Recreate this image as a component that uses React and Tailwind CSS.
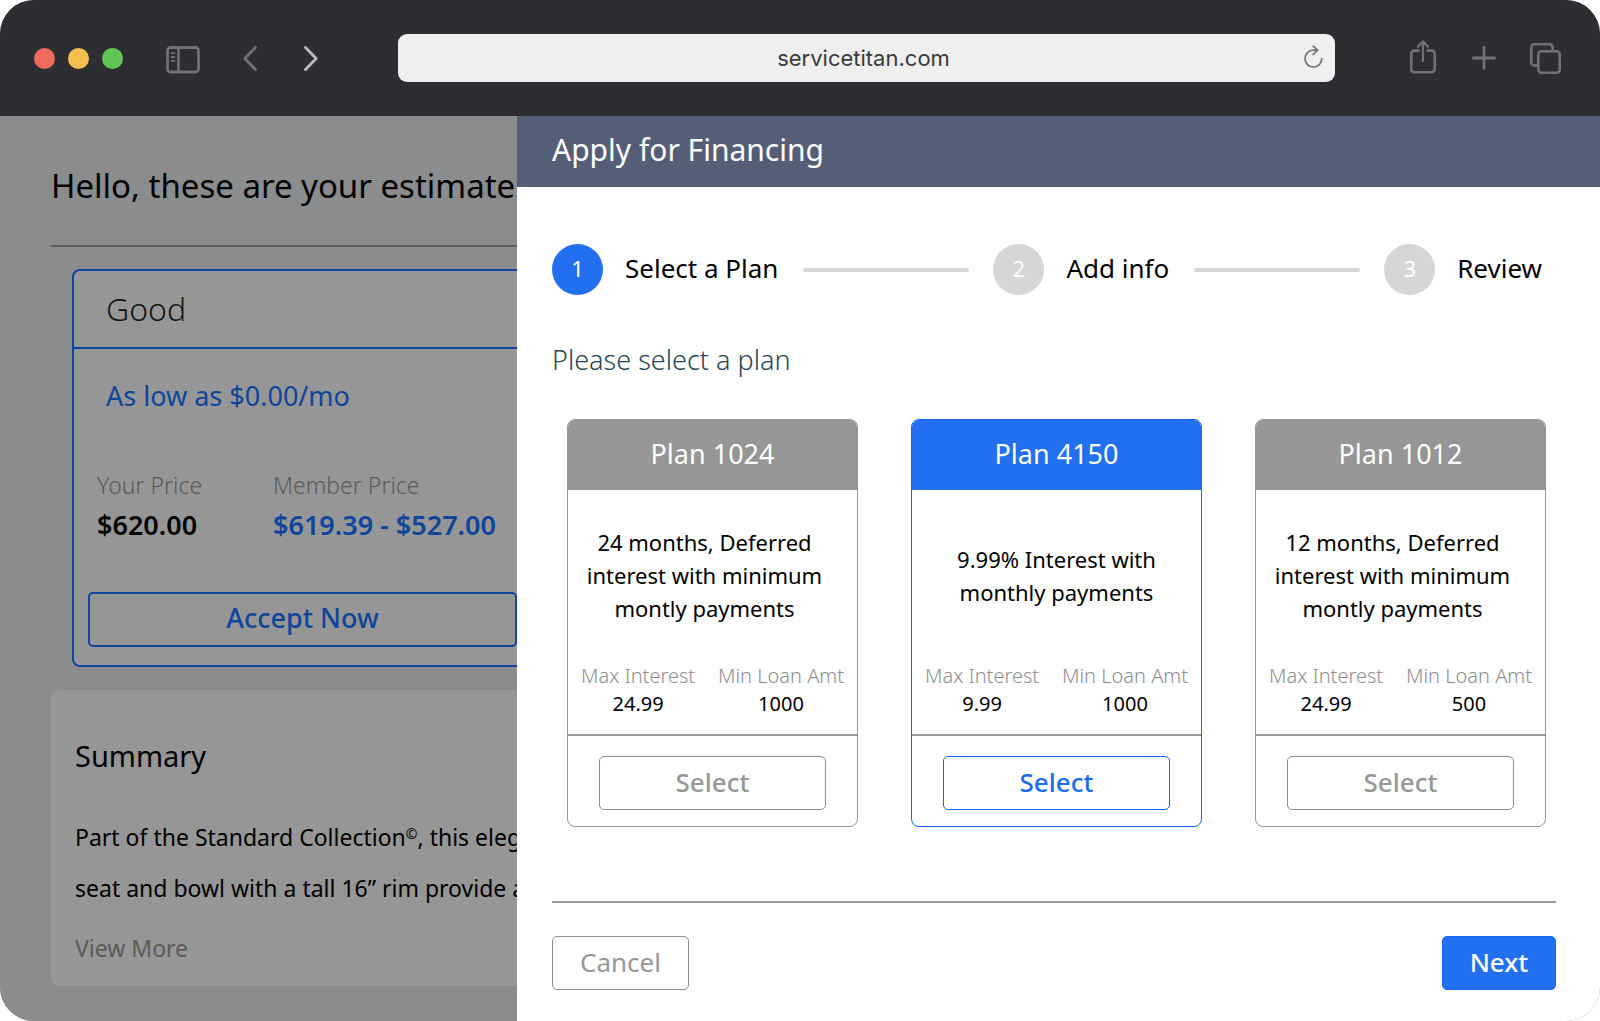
import { useState } from "react";

const plans = [
  { id: "1024", lines: "24 months, Deferred interest with minimum montly payments", maxInterest: "24.99", minLoan: "1000", long: true },
  { id: "4150", lines: "9.99% Interest with monthly payments", maxInterest: "9.99", minLoan: "1000", long: false },
  { id: "1012", lines: "12 months, Deferred interest with minimum montly payments", maxInterest: "24.99", minLoan: "500", long: true },
];

const steps = ["Select a Plan", "Add info", "Review"];

const BrowserBar = () => {
  return (
    <header className="flex h-[116px] items-center bg-[#2d2e32] pl-[34px] pr-[39px] text-[#717173]">
      <div className="flex gap-[13px]">
        <span className="size-[21px] rounded-full bg-[#ed6a5f]" />
        <span className="size-[21px] rounded-full bg-[#f5bf4f]" />
        <span className="size-[21px] rounded-full bg-[#61c555]" />
      </div>

      <button type="button" aria-label="Toggle sidebar" className="ml-[43px] pt-[3px]">
        <svg width="34" height="28" viewBox="0 0 34 28" fill="none" stroke="currentColor" strokeLinecap="round">
          <rect x="1.5" y="1.5" width="31" height="24.5" rx="3" strokeWidth="2.8" />
          <path d="M12.5 2v24" strokeWidth="2.6" />
          <path d="M5.5 7.2h3M5.5 11h3M5.5 14.8h3" strokeWidth="1.8" />
        </svg>
      </button>
      <button type="button" aria-label="Back" className="ml-[43px]">
        <svg width="14" height="26" viewBox="0 0 14 26" fill="none" stroke="currentColor" strokeWidth="2.8" strokeLinecap="round" strokeLinejoin="round">
          <path d="M12.5 2.5 1.8 13.5 12.5 24.5" />
        </svg>
      </button>
      <button type="button" aria-label="Forward" className="ml-[47px] text-[#bcbcbe]">
        <svg width="14" height="26" viewBox="0 0 14 26" fill="none" stroke="currentColor" strokeWidth="2.8" strokeLinecap="round" strokeLinejoin="round">
          <path d="M1.5 2.5 12.2 13.5 1.5 24.5" />
        </svg>
      </button>

      <div className="ml-[80px] flex h-12 flex-1 items-center rounded-[9px] bg-[#efefef] pl-[25px] pr-3">
        <input
          type="text"
          aria-label="Address"
          defaultValue="servicetitan.com"
          className="min-w-0 flex-1 bg-transparent text-center font-[Inter,sans-serif] text-[22px] text-[#3b3b3b] outline-none"
        />
        <button type="button" aria-label="Reload" className="pb-0.5">
          <svg width="19" height="24" viewBox="0 0 19 24" fill="none" stroke="currentColor" strokeWidth="1.7" strokeLinecap="round" strokeLinejoin="round">
            <path d="M17.8 13.6A8.4 8.4 0 1 1 9.4 5.2h4.2" />
            <path d="M9.2 1.2l4.4 4-4.4 4.2" />
          </svg>
        </button>
      </div>

      <button type="button" aria-label="Share" className="ml-[75px] pb-0.5">
        <svg width="26" height="34" viewBox="0 0 26 34" fill="none" stroke="currentColor" strokeWidth="2.6" strokeLinecap="round" strokeLinejoin="round">
          <path d="M8.5 10.6H4.3a3 3 0 0 0-3 3v15.6a3 3 0 0 0 3 3h17.4a3 3 0 0 0 3-3V13.6a3 3 0 0 0-3-3h-4.2" />
          <path d="M13 21V2M8 6.6 13 1.6l5 5" strokeWidth="2.2" />
        </svg>
      </button>
      <button type="button" aria-label="New tab" className="ml-9">
        <svg width="24" height="24" viewBox="0 0 24 24" fill="none" stroke="currentColor" strokeWidth="2.8" strokeLinecap="round">
          <path d="M12 1.4v21.2M1.4 12h21.2" />
        </svg>
      </button>
      <button type="button" aria-label="Show tabs" className="ml-[34px]">
        <svg width="31" height="31" viewBox="0 0 31 31" fill="none" stroke="currentColor" strokeWidth="2.6" strokeLinejoin="round">
          <rect x="8.3" y="8.3" width="21.4" height="21.4" rx="3.2" />
          <path d="M8.3 22.6H4.5a3.2 3.2 0 0 1-3.2-3.2V4.5a3.2 3.2 0 0 1 3.2-3.2h14.9a3.2 3.2 0 0 1 3.2 3.2v3.8" />
        </svg>
      </button>
    </header>
  );
};

// Dimmed page behind the financing drawer
const EstimatePage = () => {
  return (
    <main className="w-[517px] shrink-0 overflow-hidden whitespace-nowrap bg-[#8b8c8e] pb-[34px] pl-[51px] pt-[50px] text-black">
      <h1 className="text-[33px] leading-10">Hello, these are your estimate</h1>
      <hr className="mt-[39px] border-t-2 border-[#5f5f60]" />

      <section className="ml-[21px] mt-[22px] w-[600px] rounded-lg border-2 border-[#0f459b] bg-[#969696]">
        <h2 className="border-b-2 border-[#0f459b] pl-8 text-[32px] font-light leading-[76px] text-[#161616]">Good</h2>
        <div className="pb-[18px] pl-[14px] pt-[31px]">
          <p className="pl-[18px] text-[27px] leading-8 text-[#0f459b]">As low as $0.00/mo</p>
          <dl className="mt-[59px] flex pl-[9px]">
            <div className="w-[176px]">
              <dt className="text-[23px] font-light leading-7 text-[#5b5b5b]">Your Price</dt>
              <dd className="mt-[10px] text-[27px] font-semibold leading-8">$620.00</dd>
            </div>
            <div>
              <dt className="text-[23px] font-light leading-7 text-[#5b5b5b]">Member Price</dt>
              <dd className="mt-[10px] text-[27px] font-semibold leading-8 text-[#0f459b]">$619.39 - $527.00</dd>
            </div>
          </dl>
          <button type="button" className="mt-[51px] h-[55px] w-[429px] rounded-[5px] border-2 border-[#0f459b] pb-0.5 text-[27px] font-medium text-[#0f459b]">
            Accept Now
          </button>
        </div>
      </section>

      <section className="mt-[23px] w-[620px] rounded-lg bg-[#969696] pb-6 pl-6 pt-12">
        <h2 className="text-[29px] leading-9">Summary</h2>
        <p className="mt-[38px] text-[23px] leading-[51px]">
          Part of the Standard Collection<sup className="text-[14px]">©</sup>, this elega
          <br />
          seat and bowl with a tall 16” rim provide a
        </p>
        <a href="#more" className="mt-5 block text-[23px] leading-7 text-[#5b5b5b]">View More</a>
      </section>
    </main>
  );
};

const Stepper = () => {
  return (
    <ol className="flex items-center pr-[14px]">
      {steps.map((step, i) => (
        <li key={step} className="contents">
          <span className={`flex size-[51px] items-center justify-center rounded-full pb-0.5 text-[22px] text-white ${i === 0 ? "bg-[#226fef]" : "bg-[#d6d6d6]"}`}>
            {i + 1}
          </span>
          <span className="ml-[22px] whitespace-nowrap pb-0.5 text-[26px] text-black">{step}</span>
          {i < steps.length - 1 && <span className="ml-[25px] mr-6 h-1 flex-1 rounded-full bg-[#d6d6d6]" />}
        </li>
      ))}
    </ol>
  );
};

const PlanCard = ({ plan, active, onSelect }) => {
  return (
    <article className={`overflow-hidden rounded-lg border ${active ? "border-[#1466f0]" : "border-[#969696]"}`}>
      <h3 className={`pb-0.5 text-center text-[27px] leading-[68px] text-white ${active ? "bg-[#226fef]" : "bg-[#969696]"}`}>
        Plan {plan.id}
      </h3>
      <div className="pb-[17px] pt-9">
        <p className={`flex h-[99px] items-center justify-center text-center text-[22px] leading-[33px] text-black ${plan.long ? "pl-2 pr-6" : "px-4"}`}>
          {plan.lines}
        </p>
        <dl className="mt-[37px] flex justify-between px-[13px] text-center text-[20px]">
          <div>
            <dt className="font-light leading-7 text-[#8e8e8e]">Max Interest</dt>
            <dd className="leading-[27px] text-black">{plan.maxInterest}</dd>
          </div>
          <div>
            <dt className="font-light leading-7 text-[#8e8e8e]">Min Loan Amt</dt>
            <dd className="leading-[27px] text-black">{plan.minLoan}</dd>
          </div>
        </dl>
      </div>
      <div className="border-t-2 border-[#999999] px-[31px] pb-4 pt-5">
        <button
          type="button"
          onClick={onSelect}
          className={`h-[54px] w-full rounded-[5px] border pb-0.5 text-[26px] font-medium ${active ? "border-[#1466f0] text-[#1a6af0]" : "border-[#8e8e8e] text-[#969696]"}`}
        >
          Select
        </button>
      </div>
    </article>
  );
};

const FinancingDrawer = () => {
  const [selected, setSelected] = useState("4150");

  return (
    <aside className="min-w-0 flex-1 bg-white">
      <h2 className="bg-[#545e76] pb-1 pl-[35px] text-[30px] leading-[67px] text-white">Apply for Financing</h2>
      <div className="pb-[30px] pl-[35px] pr-11 pt-[57px]">
        <Stepper />
        <p className="mt-[47px] text-[27px] font-light leading-9 text-[#264653]">Please select a plan</p>

        <div className="mt-[41px] grid grid-cols-3 gap-[53px] pl-[15px] pr-[10px]">
          {plans.map((plan) => (
            <PlanCard key={plan.id} plan={plan} active={selected === plan.id} onSelect={() => setSelected(plan.id)} />
          ))}
        </div>

        <div className="mt-[74px] flex justify-between border-t-2 border-[#999999] pt-[33px]">
          <button type="button" className="h-[54px] w-[137px] rounded-[5px] border border-[#8e8e8e] pb-0.5 text-[26px] text-[#969696]">
            Cancel
          </button>
          <button type="button" className="h-[54px] w-[114px] rounded-[5px] border border-[#1466f0] bg-[#226fef] pb-0.5 text-[26px] font-medium text-white">
            Next
          </button>
        </div>
      </div>
    </aside>
  );
};

export default function App() {
  return (
    <div className="flex min-h-screen flex-col overflow-hidden rounded-[34px] bg-[#8b8c8e] font-['Noto_Sans',sans-serif]">
      <BrowserBar />
      <div className="flex flex-1">
        <EstimatePage />
        <FinancingDrawer />
      </div>
    </div>
  );
}
